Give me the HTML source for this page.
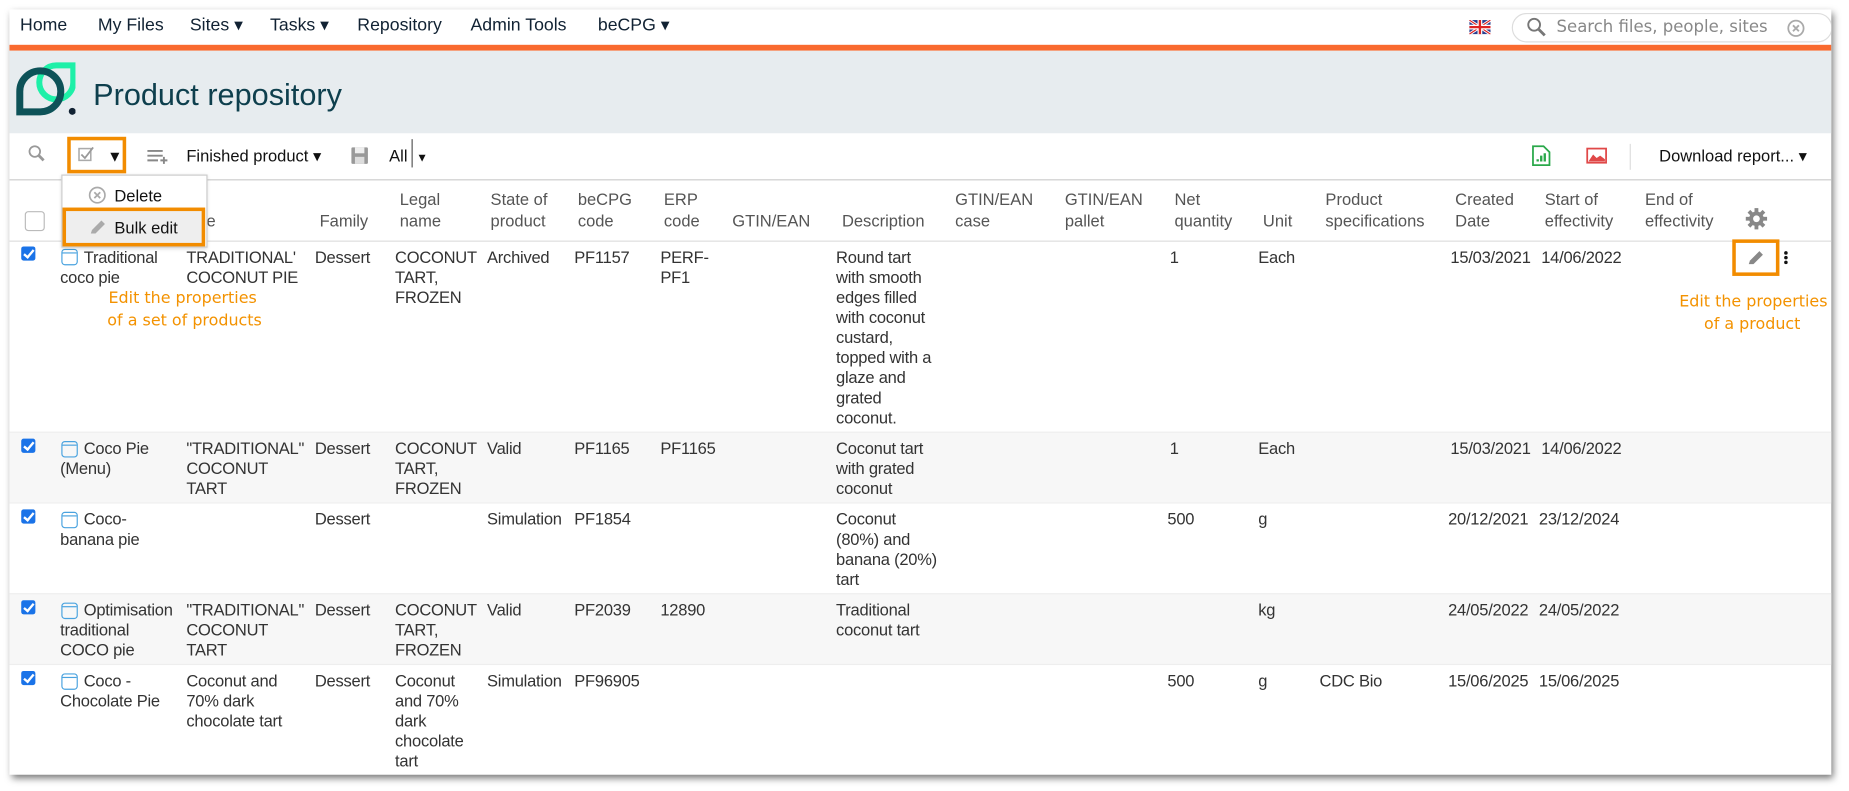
<!DOCTYPE html>
<html><head><meta charset="utf-8"><style>
*{margin:0;padding:0;box-sizing:border-box}
html,body{width:1849px;height:791px;overflow:hidden;background:#fff}
.w{position:absolute;left:0;top:0;width:1568px;height:671px;transform:scale(1.17921);transform-origin:0 0;font-family:"Liberation Sans",sans-serif;font-size:14px;color:#333}
.frame{position:absolute;left:8px;top:8px;width:1545px;height:649px;background:#fff;box-shadow:2px 3px 6px rgba(0,0,0,.55);overflow:hidden}
.a{position:absolute;white-space:nowrap;line-height:17px}
.nav{font-size:15px;color:#123;top:5px}
.hd{color:#555;line-height:18px}
.c{line-height:17px;letter-spacing:-0.2px}
.row{position:absolute;left:0;width:1545px}
.cb{position:absolute;width:12px;height:12px;background:#1a73e8;border-radius:2px}
.cb:after{content:"";position:absolute;left:4px;top:1px;width:3px;height:7px;border:solid #fff;border-width:0 2px 2px 0;transform:rotate(40deg)}
.ic{position:absolute;width:14px;height:14px;border:1.6px solid #4aa3df;border-radius:3px}
.ic:before{content:"";position:absolute;left:0;right:0;top:2px;border-top:1.5px solid #4aa3df}
.or{color:#f39200;font-family:"DejaVu Sans",sans-serif;font-size:14px;line-height:20px}
.box{position:absolute;border:3px solid #f28c00}
</style></head><body><div class="w">
<div class="frame">
<!-- nav -->
<div class="a nav" style="left:9px">Home</div>
<div class="a nav" style="left:75px">My Files</div>
<div class="a nav" style="left:153px">Sites ▾</div>
<div class="a nav" style="left:221px">Tasks ▾</div>
<div class="a nav" style="left:295px">Repository</div>
<div class="a nav" style="left:391px">Admin Tools</div>
<div class="a nav" style="left:499px">beCPG ▾</div>
<svg style="position:absolute;left:1238px;top:9px" width="18" height="12" viewBox="0 0 18 12"><rect width="18" height="12" fill="#2a3f8f"/><path d="M0 0L18 12M18 0L0 12" stroke="#fff" stroke-width="2.5"/><path d="M0 0L18 12M18 0L0 12" stroke="#d22" stroke-width="1"/><path d="M9 0V12M0 6H18" stroke="#fff" stroke-width="4"/><path d="M9 0V12M0 6H18" stroke="#d22" stroke-width="2"/></svg>
<div style="position:absolute;left:1274px;top:3px;width:272px;height:25px;border:1px solid #ddd;border-radius:13px;background:#fff"></div>
<svg style="position:absolute;left:1286px;top:6px" width="18" height="18" viewBox="0 0 18 18"><circle cx="7" cy="7" r="5" fill="none" stroke="#777" stroke-width="1.6"/><path d="M11 11L16 16" stroke="#777" stroke-width="2.4"/></svg>
<div class="a" style="left:1312px;top:7px;color:#888;font-family:'DejaVu Sans',sans-serif;font-size:14px">Search files, people, sites</div>
<svg style="position:absolute;left:1507px;top:8px" width="16" height="16"><circle cx="8" cy="8" r="6.5" fill="none" stroke="#aaa" stroke-width="1.5"/><path d="M5.5 5.5L10.5 10.5M10.5 5.5L5.5 10.5" stroke="#aaa" stroke-width="1.6"/></svg>
<div style="position:absolute;left:0;top:30px;width:1545px;height:5px;background:#f96a2f"></div>
<!-- header -->
<div style="position:absolute;left:0;top:35px;width:1545px;height:70px;background:#e7ecef"></div>
<svg style="position:absolute;left:2px;top:44px" width="54" height="46" viewBox="8.5 60 63.7 54.2"><path d="M53 64H70V81A17 17 0 1 1 53 64Z" fill="none" stroke="#1ef0a8" stroke-width="6"/><path d="M16.5 110.5V90A20.5 20.5 0 1 1 37 110.5Z" fill="none" stroke="#0d5258" stroke-width="7"/><circle cx="69" cy="110" r="3.5" fill="#123"/></svg>
<div class="a" style="left:71px;top:57px;font-size:26px;line-height:30px;color:#0e3f4d">Product repository</div>
<!-- toolbar -->
<svg style="position:absolute;left:15px;top:114px" width="16" height="16"><circle cx="6.5" cy="6.5" r="4.5" fill="none" stroke="#999" stroke-width="1.5"/><path d="M10 10L14 14" stroke="#999" stroke-width="2.4"/></svg>
<div class="box" style="left:49px;top:108px;width:50px;height:31px"></div>
<svg style="position:absolute;left:58px;top:116px" width="14" height="14"><rect x="1" y="2" width="10" height="10" fill="none" stroke="#aaa" stroke-width="1.3"/><path d="M3 7L6 10L13 1" fill="none" stroke="#999" stroke-width="1.5"/></svg>
<div class="a" style="left:83px;top:116px;font-size:13px;color:#111">▼</div>
<svg style="position:absolute;left:116px;top:118px" width="18" height="14"><path d="M1 2H14M1 6H14M1 10H10M12 10H18M15 7V13" stroke="#888" stroke-width="1.6"/></svg>
<div class="a" style="left:150px;top:116px;color:#111">Finished product ▾</div>
<svg style="position:absolute;left:289px;top:116px" width="16" height="16"><rect x="1" y="1" width="14" height="14" rx="1" fill="#999"/><rect x="4" y="1" width="8" height="5" fill="#eee"/><rect x="4" y="9" width="8" height="6" fill="#ddd"/></svg>
<div class="a" style="left:322px;top:116px;color:#111">All</div>
<div style="position:absolute;left:341px;top:110px;width:1px;height:24px;background:#555"></div>
<div class="a" style="left:345px;top:118px;font-size:10px;color:#111">▼</div>
<svg style="position:absolute;left:1291px;top:115px" width="16" height="18"><path d="M1 1H10L15 6V17H1Z" fill="#fff" stroke="#2aa84a" stroke-width="1.5"/><path d="M5 14V12M8 14V9M11 14V7" stroke="#2aa84a" stroke-width="2"/></svg>
<svg style="position:absolute;left:1337px;top:117px" width="18" height="14"><rect x="1" y="1" width="16" height="12" fill="#fff" stroke="#e04848" stroke-width="1.5"/><path d="M2 12L6 6L9 9L12 7L16 10V12Z" fill="#e04848"/></svg>
<div style="position:absolute;left:1374px;top:114px;width:1px;height:22px;background:#ddd"></div>
<div class="a" style="left:1399px;top:116px;color:#111">Download report... ▾</div>
<div style="position:absolute;left:0;top:144px;width:1545px;height:1px;background:#ccc"></div>
<!-- header row -->
<div style="position:absolute;left:13px;top:171px;width:17px;height:17px;border:1px solid #bbb;border-radius:3px;background:#fff"></div>
<div class="a hd" style="left:164px;top:170px">le</div>
<div class="a hd" style="left:263px;top:170px">Family</div>
<div class="a hd" style="left:331px;top:152px">Legal<br>name</div>
<div class="a hd" style="left:408px;top:152px">State of<br>product</div>
<div class="a hd" style="left:482px;top:152px">beCPG<br>code</div>
<div class="a hd" style="left:555px;top:152px">ERP<br>code</div>
<div class="a hd" style="left:613px;top:170px">GTIN/EAN</div>
<div class="a hd" style="left:706px;top:170px">Description</div>
<div class="a hd" style="left:802px;top:152px">GTIN/EAN<br>case</div>
<div class="a hd" style="left:895px;top:152px">GTIN/EAN<br>pallet</div>
<div class="a hd" style="left:988px;top:152px">Net<br>quantity</div>
<div class="a hd" style="left:1063px;top:170px">Unit</div>
<div class="a hd" style="left:1116px;top:152px">Product<br>specifications</div>
<div class="a hd" style="left:1226px;top:152px">Created<br>Date</div>
<div class="a hd" style="left:1302px;top:152px">Start of<br>effectivity</div>
<div class="a hd" style="left:1387px;top:152px">End of<br>effectivity</div>
<svg style="position:absolute;left:1472px;top:168px" width="19" height="19" viewBox="0 0 20 20"><g fill="#888"><circle cx="10" cy="10" r="6.5"/><rect x="8.3" y="0.5" width="3.4" height="19"/><rect x="8.3" y="0.5" width="3.4" height="19" transform="rotate(45 10 10)"/><rect x="8.3" y="0.5" width="3.4" height="19" transform="rotate(90 10 10)"/><rect x="8.3" y="0.5" width="3.4" height="19" transform="rotate(135 10 10)"/></g><circle cx="10" cy="10" r="3" fill="#fff"/></svg>
<div style="position:absolute;left:0;top:196px;width:1545px;height:1px;background:#ddd"></div>
<!-- rows -->
<div class="row" style="top:196px;height:162px"></div>
<div class="row" style="top:358px;height:60px;background:#f7f7f7;border-top:1px solid #eee"></div>
<div class="row" style="top:418px;height:77px;border-top:1px solid #eee"></div>
<div class="row" style="top:495px;height:60px;background:#f7f7f7;border-top:1px solid #eee"></div>
<div class="row" style="top:555px;height:94px;border-top:1px solid #eee"></div>

<!-- row1 -->
<div class="cb" style="left:10px;top:201px"></div><div class="ic" style="left:44px;top:203px"></div>
<div class="a c" style="left:63px;top:202px">Traditional</div><div class="a c" style="left:43px;top:219px">coco pie</div>
<div class="a c" style="left:150px;top:202px">TRADITIONAL'<br>COCONUT PIE</div>
<div class="a c" style="left:259px;top:202px">Dessert</div>
<div class="a c" style="left:327px;top:202px">COCONUT<br>TART,<br>FROZEN</div>
<div class="a c" style="left:405px;top:202px">Archived</div>
<div class="a c" style="left:479px;top:202px">PF1157</div>
<div class="a c" style="left:552px;top:202px">PERF-<br>PF1</div>
<div class="a c" style="left:701px;top:202px">Round tart<br>with smooth<br>edges filled<br>with coconut<br>custard,<br>topped with a<br>glaze and<br>grated<br>coconut.</div>
<div class="a c" style="left:984px;top:202px">1</div>
<div class="a c" style="left:1059px;top:202px">Each</div>
<div class="a c" style="left:1222px;top:202px">15/03/2021</div>
<div class="a c" style="left:1299px;top:202px">14/06/2022</div>
<div class="box" style="left:1461px;top:195px;width:40px;height:31px"></div>
<svg style="position:absolute;left:1473px;top:203px" width="16" height="15"><path d="M2 13L3 10L11 2L14 5L6 13Z" fill="#888"/></svg>
<div style="position:absolute;left:1505px;top:205px;width:3px;height:3px;background:#111;border-radius:50%;box-shadow:0 4px 0 #111,0 8px 0 #111"></div>
<div class="a or" style="left:84px;top:235px;font-size:13.5px">Edit the properties</div>
<div class="a or" style="left:83px;top:254px;font-size:13.5px">of a set of products</div>
<div class="a or" style="left:1416px;top:238px;font-size:13.5px">Edit the properties</div>
<div class="a or" style="left:1437px;top:257px;font-size:13.5px">of a product</div>
<!-- row2 -->
<div class="cb" style="left:10px;top:364px"></div><div class="ic" style="left:44px;top:366px"></div>
<div class="a c" style="left:63px;top:364px">Coco Pie</div><div class="a c" style="left:43px;top:381px">(Menu)</div>
<div class="a c" style="left:150px;top:364px">"TRADITIONAL"<br>COCONUT<br>TART</div>
<div class="a c" style="left:259px;top:364px">Dessert</div>
<div class="a c" style="left:327px;top:364px">COCONUT<br>TART,<br>FROZEN</div>
<div class="a c" style="left:405px;top:364px">Valid</div>
<div class="a c" style="left:479px;top:364px">PF1165</div>
<div class="a c" style="left:552px;top:364px">PF1165</div>
<div class="a c" style="left:701px;top:364px">Coconut tart<br>with grated<br>coconut</div>
<div class="a c" style="left:984px;top:364px">1</div>
<div class="a c" style="left:1059px;top:364px">Each</div>
<div class="a c" style="left:1222px;top:364px">15/03/2021</div>
<div class="a c" style="left:1299px;top:364px">14/06/2022</div>
<!-- row3 -->
<div class="cb" style="left:10px;top:424px"></div><div class="ic" style="left:44px;top:426px"></div>
<div class="a c" style="left:63px;top:424px">Coco-</div><div class="a c" style="left:43px;top:441px">banana pie</div>
<div class="a c" style="left:259px;top:424px">Dessert</div>
<div class="a c" style="left:405px;top:424px">Simulation</div>
<div class="a c" style="left:479px;top:424px">PF1854</div>
<div class="a c" style="left:701px;top:424px">Coconut<br>(80%) and<br>banana (20%)<br>tart</div>
<div class="a c" style="left:982px;top:424px">500</div>
<div class="a c" style="left:1059px;top:424px">g</div>
<div class="a c" style="left:1220px;top:424px">20/12/2021</div>
<div class="a c" style="left:1297px;top:424px">23/12/2024</div>
<!-- row4 -->
<div class="cb" style="left:10px;top:501px"></div><div class="ic" style="left:44px;top:503px"></div>
<div class="a c" style="left:63px;top:501px">Optimisation</div><div class="a c" style="left:43px;top:518px">traditional<br>COCO pie</div>
<div class="a c" style="left:150px;top:501px">"TRADITIONAL"<br>COCONUT<br>TART</div>
<div class="a c" style="left:259px;top:501px">Dessert</div>
<div class="a c" style="left:327px;top:501px">COCONUT<br>TART,<br>FROZEN</div>
<div class="a c" style="left:405px;top:501px">Valid</div>
<div class="a c" style="left:479px;top:501px">PF2039</div>
<div class="a c" style="left:552px;top:501px">12890</div>
<div class="a c" style="left:701px;top:501px">Traditional<br>coconut tart</div>
<div class="a c" style="left:1059px;top:501px">kg</div>
<div class="a c" style="left:1220px;top:501px">24/05/2022</div>
<div class="a c" style="left:1297px;top:501px">24/05/2022</div>
<!-- row5 -->
<div class="cb" style="left:10px;top:561px"></div><div class="ic" style="left:44px;top:563px"></div>
<div class="a c" style="left:63px;top:561px">Coco -</div><div class="a c" style="left:43px;top:578px">Chocolate Pie</div>
<div class="a c" style="left:150px;top:561px">Coconut and<br>70% dark<br>chocolate tart</div>
<div class="a c" style="left:259px;top:561px">Dessert</div>
<div class="a c" style="left:327px;top:561px">Coconut<br>and 70%<br>dark<br>chocolate<br>tart</div>
<div class="a c" style="left:405px;top:561px">Simulation</div>
<div class="a c" style="left:479px;top:561px">PF96905</div>
<div class="a c" style="left:982px;top:561px">500</div>
<div class="a c" style="left:1059px;top:561px">g</div>
<div class="a c" style="left:1111px;top:561px">CDC Bio</div>
<div class="a c" style="left:1220px;top:561px">15/06/2025</div>
<div class="a c" style="left:1297px;top:561px">15/06/2025</div>
<!-- dropdown menu -->
<div style="position:absolute;left:44px;top:140px;width:124px;height:62px;background:#fff;border:1px solid #ccc;box-shadow:0 1px 3px rgba(0,0,0,.15)"></div>
<svg style="position:absolute;left:67px;top:150px" width="15" height="15"><circle cx="7.5" cy="7.5" r="6.5" fill="none" stroke="#aaa" stroke-width="1.4"/><path d="M5 5L10 10M10 5L5 10" stroke="#aaa" stroke-width="1.5"/></svg>
<div class="a" style="left:89px;top:150px;color:#111">Delete</div>
<div style="position:absolute;left:47px;top:170px;width:119px;height:30px;background:#eee"></div>
<div class="box" style="left:45px;top:168px;width:121px;height:33px"></div>
<svg style="position:absolute;left:67px;top:177px" width="15" height="15"><path d="M2 13L3 10L11 2L14 5L6 13Z" fill="#aaa"/></svg>
<div class="a" style="left:89px;top:177px;color:#111">Bulk edit</div>
</div>
</div></body></html>
